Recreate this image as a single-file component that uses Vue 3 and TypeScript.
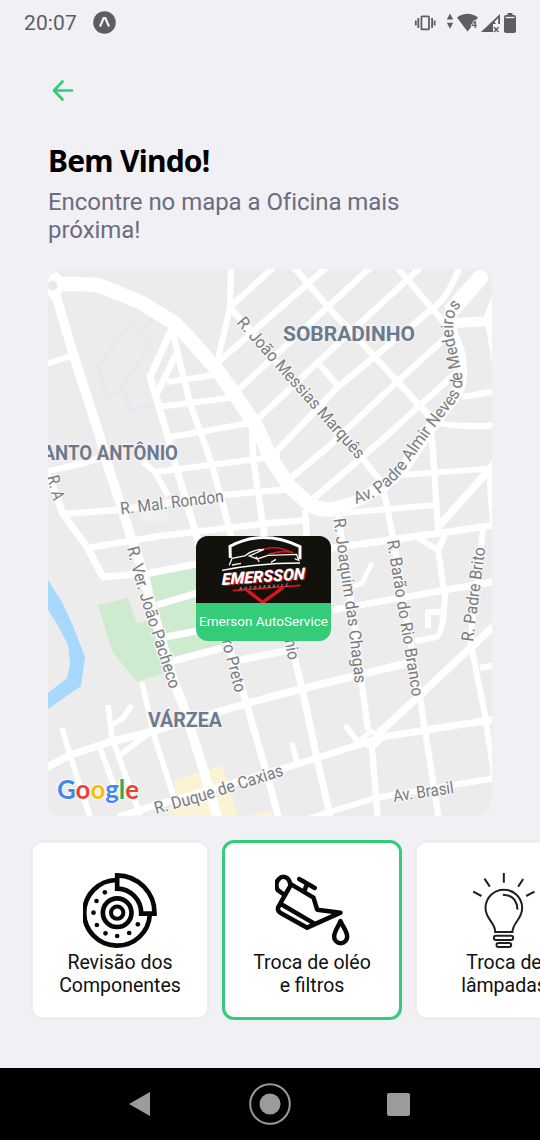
<script setup lang="ts">
interface Road {
  d: string
  w: number
}

interface StreetLabel {
  id: string
  text: string
  d: string
  length: number
}

interface Service {
  icon: 'brake' | 'oil' | 'bulb'
  lines: string[]
  selected: boolean
}

const roads: Road[] = [
  { d: 'M40 284H76L98 285L140 302L173 322L190 339L217 370L240 402L257 428L272 460L290 487L308 503Q318 511 334 509', w: 14.5 },
  { d: 'M325 509Q355 505 372 492Q392 481 405 466L438 417L455 396Q465 380 459 352L450 328Q447 314 458 300', w: 12 },
  { d: 'M450 312L480 278', w: 16 },
  { d: 'M55 292L72 350L100 437L107 463L120 503L132 540L140 563L153 610L173 680L183 705L203 768L218 820', w: 9.5 },
  { d: 'M44 365L71 356', w: 6 },
  { d: 'M172 328L150 377L168 437L177 470L197 537L227 640L247 705L270 785L279 820', w: 7 },
  { d: 'M172 330L190 403L207 450L220 493L232 540', w: 6.5 },
  { d: 'M176 354L155 398', w: 6.5 },
  { d: 'M167 382L215 375M158 407L236 397M170 437L250 423M155 472L280 456', w: 6.3 },
  { d: 'M143 462L155 472L168 496', w: 6 },
  { d: 'M63 514L117 510L223 495L290 489M87 548L160 536L270 523L308 520', w: 6.5 },
  { d: 'M44 472L85 463L107 456', w: 6 },
  { d: 'M46 470L55 492L63 514L87 547L103 577L150 573L197 564L332 548L440 533L496 525', w: 7 },
  { d: 'M157 605L197 593M332 610L400 598L496 581', w: 6.8 },
  { d: 'M165 637L197 631M173 661L222 648M235 661L290 650', w: 7 },
  { d: 'M44 769L70 755L110 742L150 732L217 712L270 697L305 688L412 662', w: 7.5 },
  { d: 'M118 817L150 807L285 768L358 745L382 737L496 719', w: 7 },
  { d: 'M310 818L375 798L496 778', w: 6 },
  { d: 'M62 728L70 755L91 820M100 748L114 786M108 705L112 738L140 815M132 705L123 718L112 725M120 755L148 734M142 682L153 732L174 798', w: 5.6 },
  { d: 'M231 264L230 307L217 363', w: 6 },
  { d: 'M230 307L315 407L362 458L388 490', w: 6.5 },
  { d: 'M230 307L276 265M217 363L328 266M238 390L372 266M257 420L317 363L420 268M274 454L338 387L438 304Q450 293 460 266', w: 6.3 },
  { d: 'M292 477L328 447L398 381L450 334M312 500L382 440L418 407L457 372', w: 6.3 },
  { d: 'M293 266L328 307L375 357L431 418M396 266L446 325M318 363L340 388', w: 6.3 },
  { d: 'M453 323L496 321', w: 10 },
  { d: 'M498 292L488 316L496 362', w: 8 },
  { d: 'M462 397L496 391M432 420Q452 429 496 425M430 425L433 450L438 530', w: 6.3 },
  { d: 'M402 475L496 468M342 513L436 505M489 473L493 526', w: 5.8 },
  { d: 'M496 462L439 526', w: 7.5 },
  { d: 'M384 492L393 537L420 698L439 820', w: 6.3 },
  { d: 'M305 510L307 540M252 425L253 457L265 540', w: 6.5 },
  { d: 'M338 513L352 607L362 685L368 730M372 748L378 820', w: 6.3 },
  { d: 'M265 540L292 648L302 688L317 758L331 820', w: 7 },
  { d: 'M371 731L383 738L372 748L360 741Z', w: 5 },
  { d: 'M379 733L420 695L498 622', w: 7.5 },
  { d: 'M345 725L358 742M292 743L297 762', w: 5.5 },
  { d: 'M483 530L472 625L471 645L485 715L494 775M480 668L496 665', w: 6 },
  { d: 'M418 538L438 550L445 535M438 550L445 597L443 620Q440 635 437 637L415 641M443 612H428V628', w: 6 },
  { d: 'M372 563L362 583L353 587', w: 5 }
]

const streetLabels: StreetLabel[] = [
  { id: 'messias', text: 'R. João Messias Marquês', d: 'M236 323L363 466', length: 183 },
  { id: 'almir', text: 'Av. Padre Almir Neves de Medeiros', d: 'M356 504L375 497Q390 487 403 472L432 431L452 406Q464 392 462 375L457 350Q450 328 455 314Q460 304 472 296', length: 247 },
  { id: 'rondon', text: 'R. Mal. Rondon', d: 'M121 514.500L235 500.500', length: 104 },
  { id: 'pacheco', text: 'R. Ver. João Pacheco', d: 'M127 548L135 580L149 625L173 700', length: 148 },
  { id: 'joaquim', text: 'R. Joaquim das Chagas', d: 'M333.500 519L341 575L347 615L357 700', length: 166 },
  { id: 'barao', text: 'R. Barão do Rio Branco', d: 'M387 541L415 714', length: 158 },
  { id: 'brito', text: 'R. Padre Brito', d: 'M473 642L487 535', length: 95 },
  { id: 'caxias', text: 'R. Duque de Caxias', d: 'M156 814L200 802L295 772', length: 134 },
  { id: 'brasil', text: 'Av. Brasil', d: 'M394 802L464 791.500', length: 61 },
  { id: 'preto', text: 'ro Preto', d: 'M221.500 641L238 704', length: 54 },
  { id: 'antonio', text: 'nio', d: 'M284.500 640L290 670', length: 21 },
  { id: 'ra', text: 'R. A', d: 'M47 477L55 508', length: 25 }
]

const brakeDots: number[][] = [
  [255, 187], [230, 213], [221, 248], [231, 285],
  [257, 310], [292, 318], [328, 309], [354, 283]
]

const services: Service[] = [
  { icon: 'brake', lines: ['Revisão dos', 'Componentes'], selected: false },
  { icon: 'oil', lines: ['Troca de oléo', 'e filtros'], selected: true },
  { icon: 'bulb', lines: ['Troca de', 'lâmpadas'], selected: false }
]
</script>

<template>
  <div class="screen">
    <header class="status">
      <span class="clock">20:07</span>
      <svg class="app-badge" viewBox="0 0 23 23">
        <circle cx="11.500" cy="11.500" r="11.300" fill="#5e5e62" />
        <path d="M7 15.500L10.600 7.200H12.400L16 15.500" fill="none" stroke="#f0f0f5" stroke-width="2.200" />
      </svg>
      <svg class="indicators" viewBox="412 10 108 26">
        <g fill="none" stroke="#5e5e62" stroke-width="1.800">
          <rect x="421.400" y="16.400" width="7.600" height="13" rx="1" />
          <path d="M418.300 18V28M415.800 20.500V25.500M432.100 18V28M434.600 20.500V25.500" />
        </g>
        <g fill="#5e5e62">
          <path d="M450 13.500L453.200 19.500H446.800ZM450 28.800L453.200 22.800H446.800Z" />
          <path d="M457 17.500Q467.500 10 478 17.500L475.500 20.500L471.500 24.500V26.500L467.500 31.500Z" />
          <path d="M481 32L500 14V24H493V32Z" />
          <path d="M504 17Q504 15 506 15H507.500V13H512.500V15H514Q516 15 516 17V31Q516 33 514 33H506Q504 33 504 31Z" />
        </g>
        <path d="M498.200 18V24H496L494.500 21.700Z" fill="#f0f0f5" />
        <path d="M494 27.300L498.500 32M498.500 27.300L494 32" stroke="#5e5e62" stroke-width="1.500" />
        <path d="M505.500 17.500H514.500" stroke="#f0f0f5" stroke-width="1.300" />
        <text x="471.500" y="28.200" class="wifi-no">4</text>
      </svg>
    </header>

    <main class="content">
      <svg class="back" viewBox="0 0 24 24">
        <path d="M21 12.500H3M11.500 3.500L3 12.500L11.500 21.500" fill="none" stroke="#34cb79" stroke-width="2.700" stroke-linecap="round" stroke-linejoin="round" />
      </svg>
      <h1 class="title">Bem Vindo!</h1>
      <p class="subtitle">Encontre no mapa a Oficina mais próxima!</p>

      <section class="map">
        <svg class="map-canvas" viewBox="48 269 444 547">
          <rect x="48" y="269" width="444" height="547" fill="#ececec" />
          <path d="M48 580L62 602L73 626L85 657L81 686L48 709V693L67 678L70 664L68 645L57 624L48 610Z" fill="#a9d8fd" />
          <path d="M98 605L128 598L137 623L157 618L150 575L197 567V632L225 638L222 648L173 661L163 673L137 682L124 666L112 651Z" fill="#ceebd0" />
          <path d="M175 780L222 765L237 812V816H169ZM247 816L272 810V816Z" fill="#fcf3d5" />
          <rect x="140" y="511" width="27" height="11" fill="#eff0f1" />
          <g fill="none" stroke="#e6e9ed" stroke-width="3.500" stroke-linejoin="round">
            <path d="M130 323L153 342L117 393L107 397L98 367ZM122 383L130 410L155 404M142 331L153 318" />
          </g>
          <g fill="none" stroke="#fff" stroke-linejoin="round">
            <path v-for="(road, i) in roads" :key="i" :d="road.d" :stroke-width="road.w" />
          </g>
          <circle cx="480" cy="278" r="8" fill="#fff" />
          <circle cx="53" cy="285" r="11.500" fill="#fff" />
          <path d="M55 271L67 281L55 290ZM48 297H62L58 303Z" fill="#fff" />
          <circle cx="52.500" cy="285.500" r="5" fill="#e9e9ea" />

          <defs>
            <path v-for="label in streetLabels" :id="label.id" :key="label.id" :d="label.d" />
          </defs>
          <text v-for="label in streetLabels" :key="label.id" class="street" :textLength="label.length" lengthAdjust="spacingAndGlyphs">
            <textPath :href="`#${label.id}`" :textLength="label.length" lengthAdjust="spacingAndGlyphs">{{ label.text }}</textPath>
          </text>

          <text class="district" x="283" y="341" textLength="132" lengthAdjust="spacingAndGlyphs">SOBRADINHO</text>
          <text class="district" x="31" y="460" textLength="147" lengthAdjust="spacingAndGlyphs">SANTO ANTÔNIO</text>
          <text class="district" x="148" y="726.500" textLength="74" lengthAdjust="spacingAndGlyphs">VÁRZEA</text>

          <text class="google" x="57" y="798.500" textLength="82" lengthAdjust="spacingAndGlyphs">
            <tspan fill="#4285f4">G</tspan><tspan fill="#ea4335">o</tspan><tspan fill="#fbbc05">o</tspan><tspan fill="#4285f4">g</tspan><tspan fill="#34a853">l</tspan><tspan fill="#ea4335">e</tspan>
          </text>
        </svg>

        <div class="marker">
          <svg class="marker-logo" viewBox="0 0 405 201">
            <rect width="405" height="201" fill="#12110c" />
            <path d="M103 66L102 31Q200 -22 312 32V70" fill="none" stroke="#fff" stroke-width="9" />
            <path d="M184 49Q210 32 250 36L292 50Q255 42 217 55" fill="none" stroke="#d3151c" stroke-width="5" />
            <path d="M100 88L108 67L146 60Q170 40 204 40L160 60L184 69L216 58L302 55L308 73L296 68M108 87L135 82M180 62L190 78M240 70L225 79" fill="none" stroke="#f4f4f4" stroke-width="4" />
            <path d="M78 103Q190 81 312 81" fill="none" stroke="#fff" stroke-width="4" />
            <path d="M110 164L314 148" stroke="#e0151b" stroke-width="5" />
            <path d="M152 162L200 199L262 154" fill="none" stroke="#e0151b" stroke-width="10" />
            <g transform="rotate(-4 205 125) skewX(-5)">
              <text class="logo-shadow" x="91" y="141" textLength="250" lengthAdjust="spacingAndGlyphs">EMERSSON</text>
              <text class="logo-name" x="88" y="138" textLength="250" lengthAdjust="spacingAndGlyphs">EMERSSON</text>
            </g>
            <text class="logo-sub" x="130" y="156" textLength="146" transform="rotate(-4 205 155)">AUTOSERVICE</text>
          </svg>
          <span class="marker-name">Emerson AutoService</span>
        </div>
      </section>
    </main>

    <section class="services">
      <article v-for="service in services" :key="service.icon" class="card" :class="{ selected: service.selected }">
        <svg v-if="service.icon === 'brake'" class="icon" viewBox="189.500 129 225 225">
          <g fill="none" stroke="#080808" stroke-width="14">
            <path d="M290 150A98.500 98.500 0 1 0 390 253" />
            <path d="M292 136A113 113 0 0 1 404 251H364A73 73 0 0 0 292 176Z" />
            <circle cx="292" cy="248" r="43" />
            <circle cx="292" cy="248" r="18.500" stroke-width="12" />
          </g>
          <circle v-for="(dot, i) in brakeDots" :key="i" :cx="dot[0]" :cy="dot[1]" r="7" fill="#080808" />
        </svg>
        <svg v-else-if="service.icon === 'oil'" class="icon" viewBox="194.500 129 225 225">
          <g fill="none" stroke="#080808" stroke-width="13.500" stroke-linecap="round" stroke-linejoin="round">
            <path d="M240 162C236 138 216 136 207 146C196 155 197 174 204 181L219 192" />
            <path d="M243 163L310 203L321 239L391 248L291 293L210 248Q201 242 204 232L215 212ZM212 222L313 281" />
            <path d="M267 147L314 174M291 161L283 181" />
            <path d="M391 273C384 291 372 304 372 320A19.500 19.500 0 0 0 411 320C411 304 398 291 391 273Z" />
          </g>
        </svg>
        <svg v-else class="icon" viewBox="201.500 129 225 225">
          <g fill="none" stroke="#231f20" stroke-width="6">
            <path d="M312 129V158M254 146L270 170M370 147L355 170M220 185L245 198M404 185L379 198" />
            <path d="M286 306C287 278 257 268 257 234A55 55 0 0 1 367 234C367 268 338 278 338 306Z" />
            <path d="M309 194Q351 195 353 239" />
            <rect x="282" y="317" width="58" height="13" rx="6.500" />
            <rect x="290" y="339" width="44" height="12" rx="6" />
          </g>
        </svg>
        <p class="card-title">
          <span v-for="line in service.lines" :key="line">{{ line }}</span>
        </p>
      </article>
    </section>

    <nav class="navbar">
      <svg viewBox="0 0 24 26" class="nav-back"><path d="M1 13L22 1V25Z" fill="#9b9b9b" /></svg>
      <svg viewBox="0 0 44 44" class="nav-home">
        <circle cx="22" cy="22" r="19.800" fill="none" stroke="#9b9b9b" stroke-width="2" />
        <circle cx="22" cy="22" r="10.500" fill="#9b9b9b" />
      </svg>
      <span class="nav-recent"></span>
    </nav>
  </div>
</template>

<style>
body {
  margin: 0;
  background: #f0f0f5;
}
</style>

<style scoped>
.screen {
  width: 540px;
  height: 1140px;
  display: flex;
  flex-direction: column;
  overflow: hidden;
  background: #f0f0f5;
  font-family: Roboto, "Liberation Sans", sans-serif;
}

.status {
  height: 45px;
  flex: none;
  box-sizing: border-box;
  padding: 0 20px 0 24px;
  display: flex;
  align-items: center;
  color: #5e5e62;
}

.clock {
  font-size: 21px;
  line-height: 24px;
  width: 69px;
  letter-spacing: 0.1px;
}

.app-badge {
  width: 23px;
  height: 23px;
}

.indicators {
  width: 108px;
  height: 26px;
  margin-left: auto;
}

.wifi-no {
  font: 700 9.500px Roboto, sans-serif;
  fill: #5e5e62;
  stroke: #f0f0f5;
  stroke-width: 1.500px;
  paint-order: stroke;
}

.content {
  padding: 33px 48px 0;
  display: flex;
  flex-direction: column;
}

.back {
  width: 24px;
  height: 24px;
  margin-left: 3px;
}

.title {
  margin: 39px 0 0;
  font: 700 30px/40px "Noto Sans", "Open Sans", sans-serif;
  letter-spacing: -0.750px;
  color: #000;
}

.subtitle {
  margin: 7px 0 0;
  width: 380px;
  font-size: 24px;
  line-height: 28px;
  letter-spacing: -0.050px;
  color: #6c6c80;
}

.map {
  position: relative;
  width: 444px;
  height: 547px;
  margin-top: 25px;
  border-radius: 15px;
  overflow: hidden;
}

.map-canvas {
  display: block;
  width: 444px;
  height: 547px;
}

.street {
  font: 400 17px Roboto, sans-serif;
  fill: #7a7c80;
  stroke: #f7f7f7;
  stroke-width: 2.500px;
  stroke-linejoin: round;
  paint-order: stroke;
}

.district {
  font: 700 21px Roboto, sans-serif;
  fill: #6c7a8d;
  stroke: #f4f4f5;
  stroke-width: 2.500px;
  stroke-linejoin: round;
  paint-order: stroke;
}

.google {
  font: 700 27px Lato, sans-serif;
  stroke: #fff;
  stroke-width: 2px;
  paint-order: stroke;
}

.marker {
  position: absolute;
  left: 148px;
  top: 267px;
  width: 135px;
  height: 105px;
  border-radius: 12px;
  overflow: hidden;
  background: #34cb79;
  display: flex;
  flex-direction: column;
}

.marker-logo {
  width: 135px;
  height: 67px;
  flex: none;
}

.marker-name {
  font-size: 13.500px;
  line-height: 37px;
  text-align: center;
  white-space: nowrap;
  color: #fff;
}

.logo-name,
.logo-shadow {
  font: italic 900 49px Roboto, sans-serif;
  fill: #fff;
}

.logo-shadow {
  fill: #d3151c;
}

.logo-sub {
  font: italic 700 12px Roboto, sans-serif;
  fill: #aaa;
}

.services {
  margin-top: 24px;
  padding-left: 30px;
  display: flex;
  gap: 12px;
}

.card {
  flex: none;
  box-sizing: border-box;
  width: 180px;
  height: 180px;
  padding-top: 30px;
  border: 3px solid #eeeef1;
  border-radius: 12px;
  background: #fff;
  display: flex;
  flex-direction: column;
  align-items: center;
}

.card.selected {
  border-color: #34cb79;
}

.icon {
  width: 75px;
  height: 75px;
  flex: none;
}

.card-title {
  margin: 3px 0 0;
  display: flex;
  flex-direction: column;
  align-items: center;
  font-size: 19.500px;
  line-height: 23px;
  color: #111;
}

.navbar {
  height: 72px;
  flex: none;
  margin-top: auto;
  background: #000;
  display: flex;
  align-items: center;
}

.nav-back {
  width: 24px;
  height: 26px;
  margin-left: 128px;
}

.nav-home {
  width: 44px;
  height: 44px;
  margin-left: 96px;
}

.nav-recent {
  width: 23px;
  height: 23px;
  margin-left: 95px;
  border-radius: 2px;
  background: #9b9b9b;
}
</style>
